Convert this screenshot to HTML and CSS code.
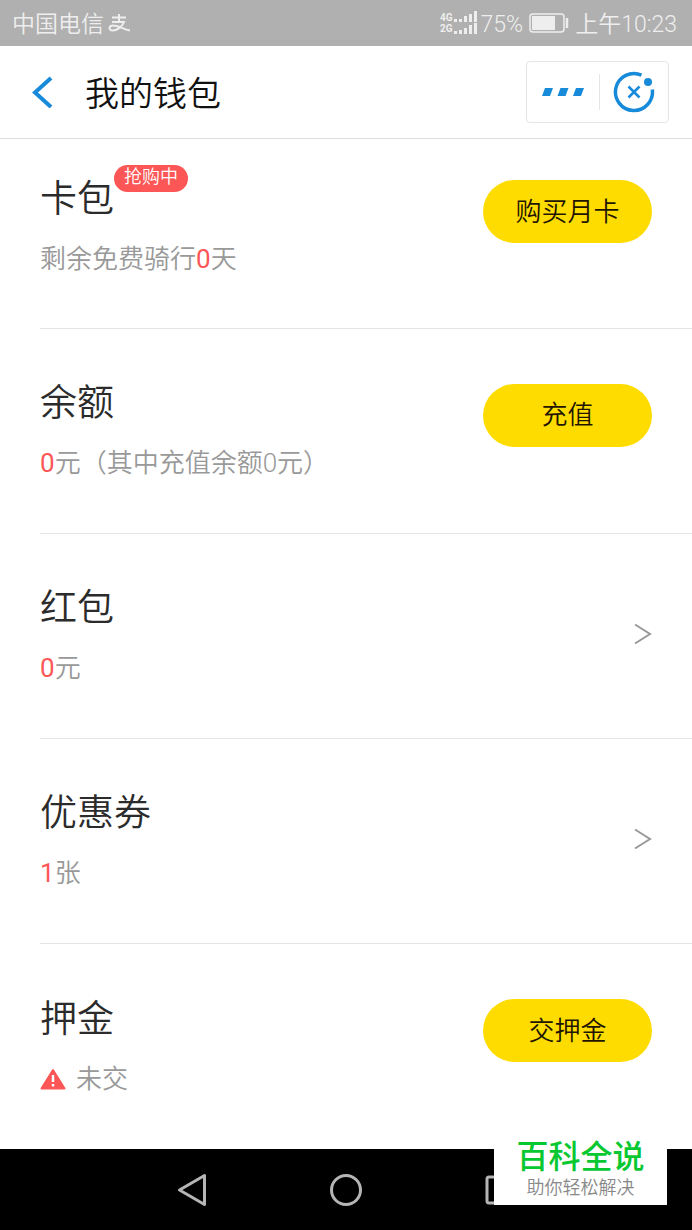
FILE: index.html
```html
<!DOCTYPE html>
<html lang="zh-CN">
<head>
<meta charset="utf-8">
<meta name="viewport" content="width=device-width, initial-scale=1">
<title>我的钱包</title>
<link rel="stylesheet" href="styles.css">
</head>
<body>
<div class="status">
  <span class="carrier">中国电信</span>
  <svg class="pay-icon" width="24" height="20" viewBox="0 0 24 20" fill="none" stroke="currentColor" stroke-width="2"><path d="M4 4.500H18M11 1V9M4 9H16C14 14 9 17.500 4.500 17.500C0.500 17.500 0.500 12.500 5 12.500C10 12.500 15 16 22 17.500"/></svg>
  <span class="spacer"></span>
  <span class="network"><span>4G</span><span>2G</span></span>
  <svg class="bars" width="24" height="24" viewBox="0 0 24 24" fill="currentColor"><path d="M0 8h3v3H0zM5 8h3v3H5zM10 5h3v6h-3zM15 3h3v8h-3zM20 0h3v11h-3zM0 20h3v3H0zM5 19h3v4H5zM10 17h3v6h-3zM15 14h3v9h-3zM20 12h3v11h-3z"/></svg>
  <span class="percent">75%</span>
  <svg class="battery" width="40" height="20" viewBox="0 0 40 20"><rect x="1" y="1" width="34" height="18" rx="3" fill="none" stroke="currentColor" stroke-width="1.500"/><rect x="3" y="3" width="23" height="14" fill="currentColor"/><path d="M38 5v10" stroke="currentColor" stroke-width="2.500"/></svg>
  <span class="clock">上午10:23</span>
</div>
<header class="header">
  <button class="back" aria-label="返回"><svg width="22" height="32" viewBox="0 0 22 32" fill="none" stroke="currentColor" stroke-width="4"><path d="M20 2L4 16.500L20 31"/></svg></button>
  <h1 class="heading">我的钱包</h1>
  <div class="capsule">
    <button class="capsule-button" aria-label="更多"><svg width="44" height="8" viewBox="0 0 44 8" fill="currentColor"><path d="M4 0h8l-3 8H1zM19.500 0h8l-3 8h-8zM35 0h8l-3 8h-8z"/></svg></button>
    <button class="capsule-button close" aria-label="关闭"><svg width="42" height="42" viewBox="0 0 42 42" fill="none" stroke="currentColor"><path d="M28.500 4.100A18.500 18.500 0 1 0 39.300 18.500" stroke-width="3.500"/><circle cx="35" cy="11" r="4" fill="currentColor" stroke="none"/><path d="M15.500 15.500L26.500 26.500M26.500 15.500L15.500 26.500" stroke-width="2.500"/></svg></button>
  </div>
</header>
<main class="wallet">
  <section class="row first">
    <div class="info"><h2 class="title">卡包<span class="badge">抢购中</span></h2><p class="detail">剩余免费骑行<span class="amount">0</span>天</p></div>
    <button class="action">购买月卡</button>
  </section>
  <section class="row">
    <div class="info"><h2 class="title">余额</h2><p class="detail"><span class="amount">0</span>元（其中充值余额0元）</p></div>
    <button class="action">充值</button>
  </section>
  <section class="row">
    <div class="info"><h2 class="title">红包</h2><p class="detail"><span class="amount">0</span>元</p></div>
    <button class="more" aria-label="查看红包"><svg width="18" height="22" viewBox="0 0 18 22"><path d="M1 1.500L16 11L1 20.500"/></svg></button>
  </section>
  <section class="row">
    <div class="info"><h2 class="title">优惠券</h2><p class="detail"><span class="amount">1</span>张</p></div>
    <button class="more" aria-label="查看优惠券"><svg width="18" height="22" viewBox="0 0 18 22"><path d="M1 1.500L16 11L1 20.500"/></svg></button>
  </section>
  <section class="row">
    <div class="info"><h2 class="title">押金</h2><p class="detail"><svg class="warning" width="26" height="22" viewBox="0 0 26 22"><path d="M13 2L24.500 20.500H1.500Z" fill="#fc5656" stroke="#fc5656" stroke-width="2" stroke-linejoin="round"/><path d="M13 7v7M13 16v2.500" stroke="#fff" stroke-width="2.500"/></svg>未交</p></div>
    <button class="action">交押金</button>
  </section>
</main>
<nav class="navbar">
  <button aria-label="返回键"><svg width="30" height="34" viewBox="0 0 30 34"><path d="M2.500 17L27.500 2.500V31.500Z"/></svg></button>
  <button aria-label="主页键"><svg width="34" height="34" viewBox="0 0 34 34"><circle cx="17" cy="17" r="14.500"/></svg></button>
  <button aria-label="任务键"><svg width="30" height="34" viewBox="0 0 30 34"><rect x="2" y="4" width="26" height="26" rx="2"/></svg></button>
</nav>
<aside class="watermark"><strong>百科全说</strong><span>助你轻松解决</span></aside>
</body>
</html>
```
FILE: styles.css
```css
* {
  box-sizing: border-box;
}

body {
  position: relative;
  display: flex;
  flex-direction: column;
  min-height: 100vh;
  margin: 0;
  background: #fff;
  color: #2b2b2b;
  font-family: Roboto, "Noto Sans CJK SC", sans-serif;
  font-weight: 350;
}

button {
  padding: 0;
  border: 0;
  background: none;
  color: inherit;
  font: inherit;
}

svg {
  display: block;
  flex: none;
}

h1, h2, p {
  margin: 0;
  font-weight: inherit;
}

.status {
  display: flex;
  align-items: center;
  height: 46px;
  padding: 0 15px 0 12px;
  background: #b0b0b0;
  color: #eee;
  font-size: 23px;
  line-height: 46px;
}

.carrier, .percent, .clock {
  padding-top: 3px;
}

.pay-icon {
  margin-left: 4px;
}

.spacer {
  flex: 1;
}

.network {
  display: flex;
  flex-direction: column;
  font-size: 10px;
  font-weight: 700;
  line-height: 11px;
}

.bars {
  margin: 0 3px 0 1px;
}

.battery {
  margin: 0 6px;
}

.header {
  display: flex;
  align-items: center;
  height: 93px;
  padding: 0 23px 0 31px;
  border-bottom: 1px solid #ddd;
}

.back {
  color: #188ada;
}

.heading {
  flex: 1;
  margin-left: 32px;
  padding-top: 3px;
  color: #111;
  font-size: 34px;
  line-height: 46px;
}

.capsule {
  display: flex;
  align-items: center;
  width: 143px;
  height: 62px;
  border: 1px solid #e5e5e5;
  border-radius: 4px;
  color: #188ada;
}

.capsule-button {
  display: flex;
  flex: 1;
  align-items: center;
  justify-content: center;
  height: 36px;
}

.close {
  flex: none;
  width: 69px;
  border-left: 1px solid #e5e5e5;
}

.wallet {
  flex: 1;
}

.row {
  display: flex;
  align-items: center;
  justify-content: space-between;
  min-height: 205px;
  margin-left: 40px;
  padding-right: 40px;
  border-bottom: 1px solid #e4e4e4;
}

.first {
  min-height: 190px;
}

.info {
  padding-bottom: 2px;
}

.first .info {
  padding-bottom: 16px;
}

.first .action {
  margin-bottom: 44px;
}

.row:last-child {
  border-bottom: 0;
}

.title {
  display: flex;
  align-items: flex-start;
  font-size: 37px;
  line-height: 54px;
}

.badge {
  height: 27px;
  margin-top: -8px;
  padding: 0 10px;
  border-radius: 14px;
  background: #fc5656;
  color: #fff;
  font-size: 18px;
  line-height: 24px;
}

.detail {
  display: flex;
  align-items: center;
  margin-top: 12px;
  color: #999;
  font-size: 26px;
  line-height: 40px;
}

.amount {
  color: #fc5656;
  font-weight: 400;
}

.warning {
  margin-right: 10px;
}

.action {
  width: 169px;
  height: 63px;
  margin-bottom: 32px;
  border-radius: 32px;
  background: #ffdc00;
  color: #221500;
  font-size: 26px;
  line-height: 60px;
}

.more {
  margin-bottom: 4px;
}

.more svg {
  fill: none;
  stroke: #999;
  stroke-width: 2;
}

.navbar {
  display: flex;
  align-items: center;
  justify-content: center;
  gap: 122px;
  height: 81px;
  background: #000;
}

.navbar svg {
  fill: none;
  stroke: #b5b5b5;
  stroke-width: 3;
  stroke-linejoin: round;
}

.watermark {
  position: absolute;
  right: 25px;
  bottom: 25px;
  display: flex;
  flex-direction: column;
  align-items: center;
  width: 173px;
  height: 70px;
  padding-top: 3px;
  background: #fff;
  color: #888;
  font-size: 18px;
  line-height: 24px;
}

.watermark strong {
  color: #08c832;
  font-size: 32px;
  font-weight: 500;
  line-height: 38px;
}
```
